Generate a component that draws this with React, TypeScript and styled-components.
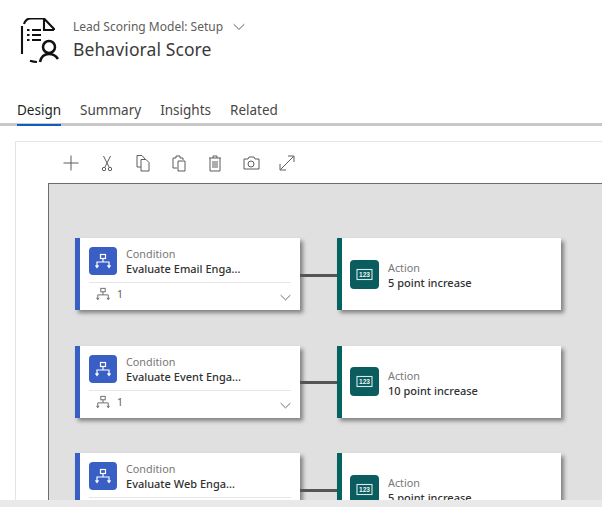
import React from "react";
import styled, { createGlobalStyle } from "styled-components";

const Global = createGlobalStyle`
  html, body { margin: 0; padding: 0; background: #fff; }
  * { box-sizing: border-box; }
`;
const Page = styled.div`
  width: 602px; height: 507px; display: flex; flex-direction: column; overflow: hidden;
  font-family: "Noto Sans", "Open Sans", sans-serif; background: #fff; color: #323130;
`;
const Main = styled.div`flex: 1; min-height: 0; overflow: hidden;`;
const ScrollBar = styled.div`height: 7px; flex: none; background: #e9e9e9;`;
const Header = styled.header`display: flex; height: 100px; padding: 18px 0 0 20px; gap: 11px;`;
const Titles = styled.div`display: flex; flex-direction: column;`;
const Crumb = styled.div`display: flex; align-items: center; gap: 10px; font-size: 12px; line-height: 17px; color: #605e5c;`;
const Title = styled.div`font-size: 17.5px; line-height: 25px; margin-top: 2px; color: #3b3a39; letter-spacing: 0.1px;`;
const Tabs = styled.nav`display: flex; gap: 19px; height: 26px; padding-left: 17px; border-bottom: 3px solid #c8c8c8;`;
const Tab = styled.div<{ $active?: boolean }>`
  font-size: 13.5px; line-height: 20px; height: 26px; color: ${(p) => (p.$active ? "#201f1e" : "#484644")};
  border-bottom: ${(p) => (p.$active ? "2px solid #0f5dbf" : "none")};
`;
const Panel = styled.section`
  margin: 15px 0 0 15px; border: 1px solid #e4e4e4; border-right: none; border-bottom: none;
  padding: 0 0 0 32px; height: 400px;
`;
const Toolbar = styled.div`display: flex; align-items: center; height: 41px; padding-left: 13px; gap: 16px;`;
const Tool = styled.span`display: inline-flex; width: 20px; justify-content: center; color: #5c5c5c;`;
const Canvas = styled.div`
  border: 1px solid #6d6d6d; border-right: none; border-bottom: none; background: #e0e0e0;
  height: 340px; padding: 54px 0 0 26px; display: flex; flex-direction: column; gap: 35.5px;
`;
const Row = styled.div`display: flex; align-items: center; flex: none;`;
const Card = styled.div<{ $accent: string }>`
  width: 225px; height: 72px; flex: none; background: #fff; border-left: 5px solid ${(p) => p.$accent};
  box-shadow: 3px 3px 4px rgba(0,0,0,.42); padding: 8px 9px 0 9px; display: flex; flex-direction: column;
`;
const ActionCard = styled(Card)`width: 224px; padding: 20px 8px 0 8px;`;
const Connector = styled.div`width: 37px; height: 3px; margin-top: 2px; background: #555; flex: none;`;
const Top = styled.div`display: flex; align-items: center; gap: 9px;`;
const IconTile = styled.div<{ $bg: string }>`
  width: 28px; height: 28px; border-radius: 4px; background: ${(p) => p.$bg}; flex: none;
  display: flex; align-items: center; justify-content: center;
`;
const ActionTile = styled(IconTile)`width: 29px; height: 29px;`;
const ActionText = styled.div`padding-top: 2px;`;
const Kind = styled.div`font-size: 10.8px; line-height: 15px; color: #797775;`;
const Name = styled.div`font-size: 11px; line-height: 15px; font-weight: 500; color: #323130;`;
const Foot = styled.div`
  margin-top: 6px; border-top: 1px solid #e6e6e6; display: flex; align-items: flex-start;
  justify-content: space-between; padding: 4px 0 0 7px; height: 26px; color: #605e5c; font-size: 10.5px;
`;
const Count = styled.span`display: inline-flex; align-items: flex-start; gap: 7px; line-height: 14px;`;
const Chevron = styled.span`display: inline-flex; margin-top: 7px;`;

const Flow = ({ c = "currentColor", s = 16, w = 1 }: { c?: string; s?: number; w?: number }) => (
  <svg width={s} height={s} viewBox="0 0 16 16" fill="none" stroke={c} strokeWidth={w}>
    <rect x="5.5" y="1.5" width="5" height="4" />
    <path d="M8 5.5V9M2 14V9h12v5M.5 12.3 2 14.5l1.500-2.200M12.500 12.300l1.500 2.200 1.500-2.200" />
  </svg>
);
const Num = () => (
  <svg width="17" height="13" viewBox="0 0 17 13">
    <rect x="1" y="1.5" width="15" height="10" fill="none" stroke="#d5ecec" strokeWidth="1.1" />
    <text x="8.5" y="9" textAnchor="middle" fontSize="6.6" fontWeight="700" fontFamily="Liberation Sans, sans-serif" fill="#eaf6f6">123</text>
  </svg>
);
const Down = ({ w = 12 }: { w?: number }) => (
  <svg width={w} height={(w * 2) / 3} viewBox="0 0 12 8" fill="none" stroke="#5f5f5f" strokeWidth="1">
    <path d="M.7 1.2 6 6.4l5.3-5.2" />
  </svg>
);
const Logo = () => (
  <svg width="42" height="46" viewBox="0 0 42 46" fill="none" stroke="#111" strokeWidth="2.1" style={{ flex: "none" }}>
    <path d="M2 8v28" />
    <path d="M4 6c1-3 3-5.500 7-5.500h13L34 11v1" />
    <path d="M24 .5V12h10" />
    <path d="M7 12h2.500M12 12h9M7 17h2.500M12 17h9M7 22h2.500M12 22h9" strokeWidth="2" />
    <circle cx="29" cy="29" r="6" strokeWidth="2.500" />
    <path d="M20 44c1-5 4-8 9-8 4 0 7 2 9 5" strokeWidth="2.500" />
    <path d="M10 42.800c2 .7 5 1.200 7 1.200" />
  </svg>
);

const ic = { width: 20, height: 20, viewBox: "0 0 20 20", fill: "none", stroke: "currentColor", strokeWidth: 1 };
const tools = [
  <svg {...ic}><path d="M10 2.500v15M2.500 10h15" /></svg>,
  <svg {...ic}><path d="M6.500 3 12 14M13.500 3 8 14" /><circle cx="7" cy="16" r="1.700" /><circle cx="13" cy="16" r="1.700" /></svg>,
  <svg {...ic}><path d="M8 14H4V2.500h5l3 3.500" /><path d="M8 6.500h5l3 3V18H8z" /></svg>,
  <svg {...ic}><path d="M8 15H4V5h3V3h4v2h3v2" /><path d="M9 8h7v10H9z" /></svg>,
  <svg {...ic}><path d="M4 5h12M8 5V3h4v2M5 5v13h10V5M8 8v7M10 8v7M12 8v7" /></svg>,
  <svg {...ic}><path d="M3 6h4l1-2h5l1 2h4v10H3z" /><circle cx="10" cy="11" r="3" /></svg>,
  <svg {...ic}><path d="M3.500 16.500 16.500 3.500M11 3h6v6M3 11v6h6" /></svg>,
];

const Condition = ({ name }: { name: string }) => (
  <Card $accent="#3a5fc4">
    <Top>
      <IconTile $bg="#3a5fc4"><Flow c="#fff" w={1.2} /></IconTile>
      <div>
        <Kind>Condition</Kind>
        <Name>{name}</Name>
      </div>
    </Top>
    <Foot>
      <Count><Flow s={14} />1</Count>
      <Chevron><Down w={11} /></Chevron>
    </Foot>
  </Card>
);
const Action = ({ name }: { name: string }) => (
  <ActionCard $accent="#04625f">
    <Top>
      <ActionTile $bg="#0b5c5e"><Num /></ActionTile>
      <ActionText>
        <Kind>Action</Kind>
        <Name>{name}</Name>
      </ActionText>
    </Top>
  </ActionCard>
);

export default function App() {
  const rows = [
    ["Evaluate Email Enga...", "5 point increase"],
    ["Evaluate Event Enga...", "10 point increase"],
    ["Evaluate Web Enga...", "5 point increase"],
  ];
  return (
    <Page>
      <Global />
      <Main>
        <Header>
          <Logo />
          <Titles>
            <Crumb>Lead Scoring Model: Setup <Down /></Crumb>
            <Title>Behavioral Score</Title>
          </Titles>
        </Header>
        <Tabs>
          <Tab $active>Design</Tab>
          <Tab>Summary</Tab>
          <Tab>Insights</Tab>
          <Tab>Related</Tab>
        </Tabs>
        <Panel>
          <Toolbar>
            {tools.map((t, i) => <Tool key={i}>{t}</Tool>)}
          </Toolbar>
          <Canvas>
            {rows.map(([a, b]) => (
              <Row key={a}>
                <Condition name={a} />
                <Connector />
                <Action name={b} />
              </Row>
            ))}
          </Canvas>
        </Panel>
      </Main>
      <ScrollBar />
    </Page>
  );
}
